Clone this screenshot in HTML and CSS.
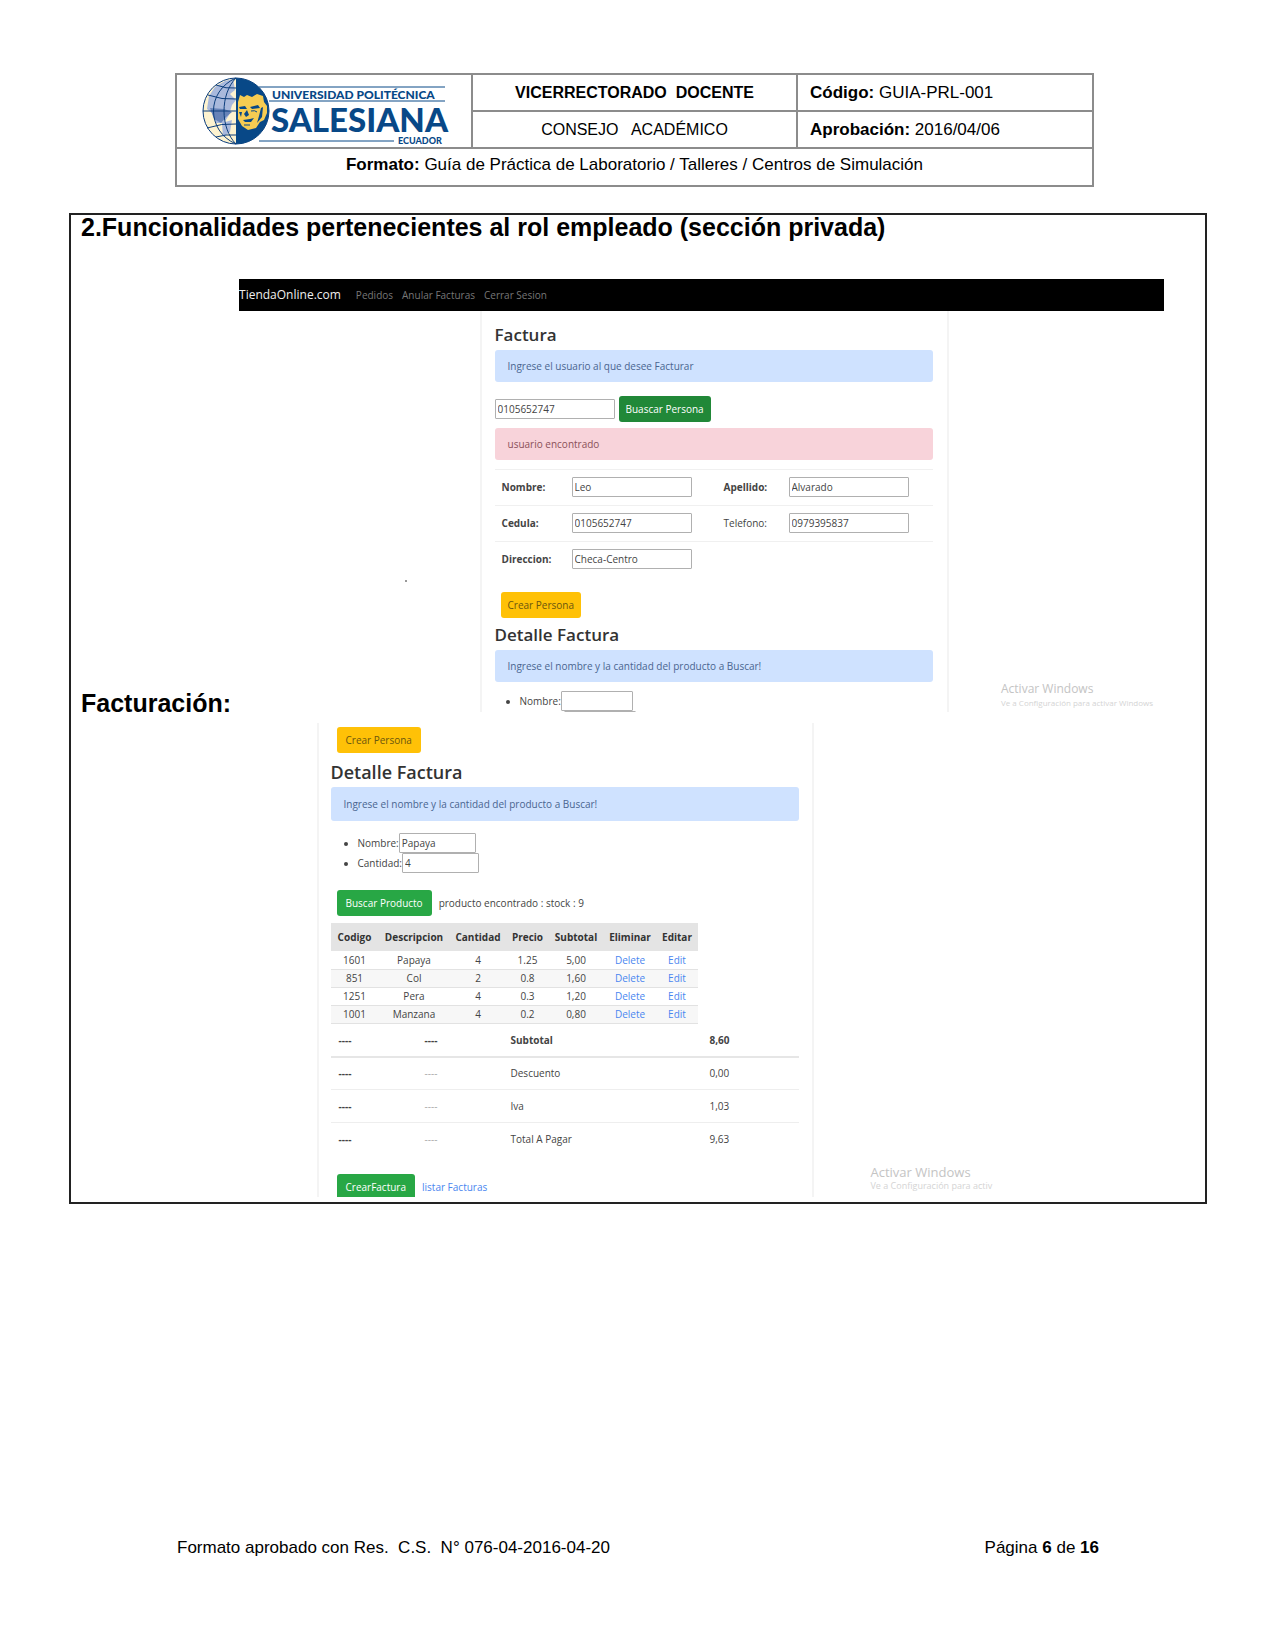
FILE: index.html
```html
<!DOCTYPE html>
<html lang="es">
<head>
<meta charset="utf-8">
<title>Guía de Práctica de Laboratorio</title>
<link rel="stylesheet" href="styles.css">
</head>
<body>
<header class="doc-header">
  <table class="doc-table">
    <colgroup><col class="col-logo"><col class="col-unit"><col class="col-code"></colgroup>
    <tr>
      <td rowspan="2" class="logo-cell">
        <svg class="logo" width="248" height="70" viewBox="0 0 248 70" role="img" aria-label="Universidad Politécnica Salesiana Ecuador">
          <circle cx="35" cy="35" r="33" fill="#fdf3d0"/>
          <path d="M8 20 L14 11 L24 5 L32 3 L34 14 L29 18 L35 24 L31 29 L28 39 L23 47 L15 47 L11 37 L6 33 Z M21 47 L31 44 L29 56 L22 61 Z" fill="#a9b9dc"/>
          <path d="M9 32 L23 33 L31 36 L25 41 L20 47 L13 43 Z" fill="#6683b8"/>
          <g fill="none" stroke="#0b3d7c" stroke-width="1">
            <path d="M35 2 C5 15 5 55 35 68 M35 2 C19 18 19 52 35 68 M2 35 H35 M7 19 Q21 24 35 23 M6 52 Q21 47 35 48 M15 9 Q25 13 35 12 M15 61 Q25 58 35 59"/>
            <circle cx="35" cy="35" r="33"/>
          </g>
          <path d="M35 2 A33 33 0 0 1 35 68 Z" fill="#084887"/>
          <path d="M37 26 L39 19 L43 21 L46 19 L51 21 L56 18 L62 20 L63 26 L66 30 L66 37 L63 44 L59 46 L55 52 L47 54 L41 50 L37 43 Z" fill="#f6cc52"/>
          <path d="M38 31 L44 30 L46 33 L39 33 Z M49 31 L57 29 L59 32 L51 33 Z M46 34 L48 39 L45 41 L43 38 Z M42 44 L49 43 L53 42 L50 46 L44 46 Z M60 32 L62 31 L61 41 L56 47 L58 40 Z M38 36 L41 36 L40 41 Z" fill="#084887"/>
          <path d="M50 35 Q54 34 56 36 M43 49 L49 49" stroke="#084887" stroke-width="1" fill="none"/>
          <path d="M58 11 H244 M68 25 H244 M58 65 H193" stroke="#084887" stroke-width="1"/>
          <text x="71" y="23" class="logo-top">UNIVERSIDAD POLITÉCNICA</text>
          <text x="70" y="56" class="logo-name">SALESIANA</text>
          <text x="197" y="68" class="logo-country">ECUADOR</text>
        </svg>
      </td>
      <td class="center unit"><strong>VICERRECTORADO&nbsp; DOCENTE</strong></td>
      <td><strong>Código:</strong> GUIA-PRL-001</td>
    </tr>
    <tr>
      <td class="center unit">CONSEJO&nbsp;&nbsp; ACADÉMICO</td>
      <td><strong>Aprobación:</strong> 2016/04/06</td>
    </tr>
    <tr>
      <td colspan="3" class="center format"><strong>Formato:</strong> Guía de Práctica de Laboratorio / Talleres / Centros de Simulación</td>
    </tr>
  </table>
</header>

<main class="sheet">
  <h1 class="sheet-title">2.Funcionalidades pertenecientes al rol empleado (sección privada)</h1>

  <section class="capture-row">
    <h2 class="capture-label">Facturación:</h2>
    <div class="shot shot-first">
      <nav class="navbar">
        <a class="brand" href="#">TiendaOnline.com</a>
        <a href="#">Pedidos</a>
        <a href="#">Anular Facturas</a>
        <a href="#">Cerrar Sesion</a>
      </nav>
      <span class="speck"></span>
      <div class="panel">
        <h3 class="panel-title">Factura</h3>
        <p class="alert info">Ingrese el usuario al que desee Facturar</p>
        <div class="search">
          <input class="field" type="text" aria-label="Cedula a buscar" value="0105652747">
          <button class="btn green-dark" type="button">Buascar Persona</button>
        </div>
        <p class="alert danger">usuario encontrado</p>
        <div class="person">
          <label class="strong" for="nombre">Nombre:</label><input class="field" id="nombre" type="text" value="Leo">
          <label class="strong" for="apellido">Apellido:</label><input class="field" id="apellido" type="text" value="Alvarado">
        </div>
        <div class="person">
          <label class="strong" for="cedula">Cedula:</label><input class="field" id="cedula" type="text" value="0105652747">
          <label for="telefono">Telefono:</label><input class="field" id="telefono" type="text" value="0979395837">
        </div>
        <div class="person">
          <label class="strong" for="direccion">Direccion:</label><input class="field" id="direccion" type="text" value="Checa-Centro">
        </div>
        <div class="actions"><button class="btn yellow" type="button">Crear Persona</button></div>
        <h3 class="panel-title">Detalle Factura</h3>
        <p class="alert info">Ingrese el nombre y la cantidad del producto a Buscar!</p>
        <ul class="query">
          <li><label for="prod-a">Nombre:</label><input class="field" id="prod-a" type="text"></li>
          <li class="cut"><input class="field" type="text" aria-label="Cantidad"></li>
        </ul>
      </div>
      <div class="watermark"><span>Activar Windows</span><small>Ve a Configuración para activar Windows</small></div>
    </div>
  </section>

  <section class="shot shot-second">
    <div class="panel">
      <div class="actions"><button class="btn yellow" type="button">Crear Persona</button></div>
      <h3 class="panel-title">Detalle Factura</h3>
      <p class="alert info">Ingrese el nombre y la cantidad del producto a Buscar!</p>
      <ul class="query">
        <li><label for="prod-b">Nombre:</label><input class="field" id="prod-b" type="text" value="Papaya"></li>
        <li><label for="cant-b">Cantidad:</label><input class="field" id="cant-b" type="text" value="4"></li>
      </ul>
      <div class="actions find"><button class="btn green" type="button">Buscar Producto</button><span>producto encontrado : stock : 9</span></div>
      <table class="items">
        <colgroup><col class="w-cod"><col class="w-des"><col class="w-can"><col class="w-pre"><col class="w-sub"><col class="w-eli"><col class="w-edi"></colgroup>
        <thead><tr><th>Codigo</th><th>Descripcion</th><th>Cantidad</th><th>Precio</th><th>Subtotal</th><th>Eliminar</th><th>Editar</th></tr></thead>
        <tbody>
          <tr><td>1601</td><td>Papaya</td><td>4</td><td>1.25</td><td>5,00</td><td><a href="#">Delete</a></td><td><a href="#">Edit</a></td></tr>
          <tr><td>851</td><td>Col</td><td>2</td><td>0.8</td><td>1,60</td><td><a href="#">Delete</a></td><td><a href="#">Edit</a></td></tr>
          <tr><td>1251</td><td>Pera</td><td>4</td><td>0.3</td><td>1,20</td><td><a href="#">Delete</a></td><td><a href="#">Edit</a></td></tr>
          <tr><td>1001</td><td>Manzana</td><td>4</td><td>0.2</td><td>0,80</td><td><a href="#">Delete</a></td><td><a href="#">Edit</a></td></tr>
        </tbody>
      </table>
      <table class="totals">
        <colgroup><col class="t-a"><col class="t-b"><col class="t-c"><col></colgroup>
        <thead><tr><th>----</th><th>----</th><th>Subtotal</th><th>8,60</th></tr></thead>
        <tbody>
          <tr><th>----</th><td class="faint">----</td><td>Descuento</td><td>0,00</td></tr>
          <tr><th>----</th><td class="faint">----</td><td>Iva</td><td>1,03</td></tr>
          <tr><th>----</th><td class="faint">----</td><td>Total A Pagar</td><td>9,63</td></tr>
        </tbody>
      </table>
      <div class="actions create"><button class="btn green" type="button">CrearFactura</button><a href="#">listar Facturas</a></div>
    </div>
    <div class="watermark"><span>Activar Windows</span><small>Ve a Configuración para activ</small></div>
  </section>
</main>

<footer class="doc-footer">
  <span>Formato aprobado con Res.&nbsp; C.S.&nbsp; N° 076-04-2016-04-20</span>
  <span>Página <strong>6</strong> de <strong>16</strong></span>
</footer>
</body>
</html>
```
FILE: styles.css
```css
* { box-sizing: border-box; }

body {
  margin: 0;
  min-height: 100vh;
  display: flex;
  flex-direction: column;
  background: #fff;
  color: #000;
  font: 17px/20px "Liberation Sans", Arial, sans-serif;
}

h1, h2, h3, p, ul { margin: 0; padding: 0; }

/* Document header */
.doc-header { padding: 73px 181px 0 175px; }
.doc-table {
  width: 100%;
  border-collapse: collapse;
  table-layout: fixed;
}
.doc-table td {
  height: 37px;
  padding: 0 12px;
  border: 2px solid #8c8c8c;
}
.doc-table .center { text-align: center; }
.doc-table .unit { font-size: 16px; }
.doc-table .format { height: 38px; padding-bottom: 5px; }
.col-logo { width: 296px; }
.col-unit { width: 325px; }
.doc-table .logo-cell { padding: 0 0 0 24px; }
.logo { display: block; }
.logo text { fill: #084887; font-family: Lato, sans-serif; font-weight: 900; }
.logo .logo-top { font-size: 12px; }
.logo .logo-name { font-size: 33px; }
.logo .logo-country { font-size: 9px; }

/* Bordered sheet */
.sheet {
  margin: 26px 68px 0 69px;
  border: 2px solid #222;
  padding-bottom: 5px;
}
.sheet-title, .capture-label {
  padding-left: 10px;
  font-size: 25px;
  line-height: 24px;
  font-weight: 700;
}
.capture-row {
  display: flex;
  align-items: flex-end;
  gap: 8px;
  margin-top: 40px;
  padding-right: 41px;
}
.capture-label { flex: none; margin-bottom: -3px; }

/* Store captures */
.shot {
  position: relative;
  overflow: hidden;
  background: #fff;
  color: #444;
  font: 10px/14px "Open Sans", "Noto Sans", sans-serif;
}
.shot a { color: #4a86f0; text-decoration: none; }
.shot-first { flex: 1; height: 433px; }
.shot-second { width: 717px; height: 474px; margin: 11px auto 0; }

.navbar {
  display: flex;
  align-items: center;
  gap: 9px;
  height: 32px;
  background: #000;
}
.shot .navbar a { color: #777; }
.shot .navbar .brand { margin-right: 6px; color: #eee; font-size: 12px; }

.panel { border: solid #f4f4f4; border-width: 0 2px; }
.shot-first .panel { width: 469px; margin-left: 26%; padding: 12px 14px 0 13px; }
.shot-second .panel { width: 497px; margin-left: 37px; padding: 4px 13px 0 12px; }

.panel-title { color: #333; font-size: 17px; line-height: 24px; font-weight: 600; }
.alert { height: 32px; padding: 0 13px; border-radius: 3px; line-height: 32px; }
.panel-title + .alert { margin-top: 3px; }
.info { background: #cfe2ff; color: #4a6590; }
.danger { background: #f8d3da; color: #8a5058; }

.field {
  width: 120px;
  height: 20px;
  padding: 0 2px;
  border: 1px solid #b0b0b0;
  border-radius: 1px;
  background: #fff;
  color: #444;
  font: inherit;
}
.btn {
  height: 26px;
  padding: 0 9px;
  border: 0;
  border-radius: 3px;
  color: #fff;
  font: inherit;
}
.shot-first .btn { padding: 0 7px; }
.green { background: #28a745; }
.green-dark { background: #218838; }
.yellow { background: #ffc107; color: #6b560f; }

.search { display: flex; align-items: center; gap: 4px; margin: 14px 0 6px; }
.person {
  display: grid;
  grid-template-columns: 70px 152px 65px 1fr;
  align-items: center;
  height: 36px;
  padding: 0 0 2px 7px;
  border-top: 1px solid #f0f0f0;
}
.alert + .person { margin-top: 9px; }
.strong { font-weight: 700; }
.actions { display: flex; align-items: center; gap: 7px; padding-left: 6px; }
.person + .actions { margin: 15px 0 5px; }

.query { padding: 9px 0 0 25px; }
.query li { height: 20px; line-height: 20px; }
.query .field { width: 72px; vertical-align: top; }
.query .cut { padding-left: 44px; list-style: none; }

.shot-second .panel-title { margin-top: 7px; font-size: 18px; }
.shot-second .alert { height: 34px; line-height: 34px; }
.shot-second .query { padding: 12px 0 0 27px; }
.shot-second .query .field { width: 77px; }
.find { margin: 17px 0 7px; }

.items { border-collapse: collapse; table-layout: fixed; width: 367px; }
.items th { height: 28px; padding: 0; background: #e4e4e4; color: #333; }
.items td { height: 18px; padding: 0; border-bottom: 1px solid #e2e2e2; text-align: center; }
.items tbody tr:nth-child(even) { background: #f7f7f7; }
.w-cod { width: 48px; }
.w-des { width: 71px; }
.w-can { width: 57px; }
.w-pre { width: 42px; }
.w-sub { width: 55px; }
.w-eli { width: 53px; }
.w-edi { width: 41px; }

.totals { width: 100%; border-collapse: collapse; table-layout: fixed; }
.totals th, .totals td { height: 33px; padding: 0 8px; border-bottom: 1px solid #eee; text-align: left; }
.totals thead th { border-bottom: 2px solid #e6e6e6; }
.totals tbody tr:last-child > * { border-bottom: 0; }
.totals .faint { color: #aaa; }
.t-a, .t-b { width: 86px; }
.t-c { width: 199px; }
.create { margin-top: 18px; }

.watermark {
  position: absolute;
  right: 0;
  bottom: 2px;
  display: flex;
  flex-direction: column;
  width: 163px;
  color: #c4c4c4;
  font-size: 12px;
  white-space: nowrap;
}
.watermark small { color: #d4d4d4; font-size: 8px; }
.shot-second .watermark { bottom: 4px; width: 126px; font-size: 13px; }
.shot-second .watermark small { font-size: 9px; }

/* Stray mark on the blank left side */
.speck {
  position: absolute;
  left: 166px;
  top: 301px;
  width: 2px;
  height: 2px;
  background: #999;
}

.doc-footer {
  display: flex;
  justify-content: space-between;
  margin-top: auto;
  padding: 0 176px 92px 177px;
}
```
